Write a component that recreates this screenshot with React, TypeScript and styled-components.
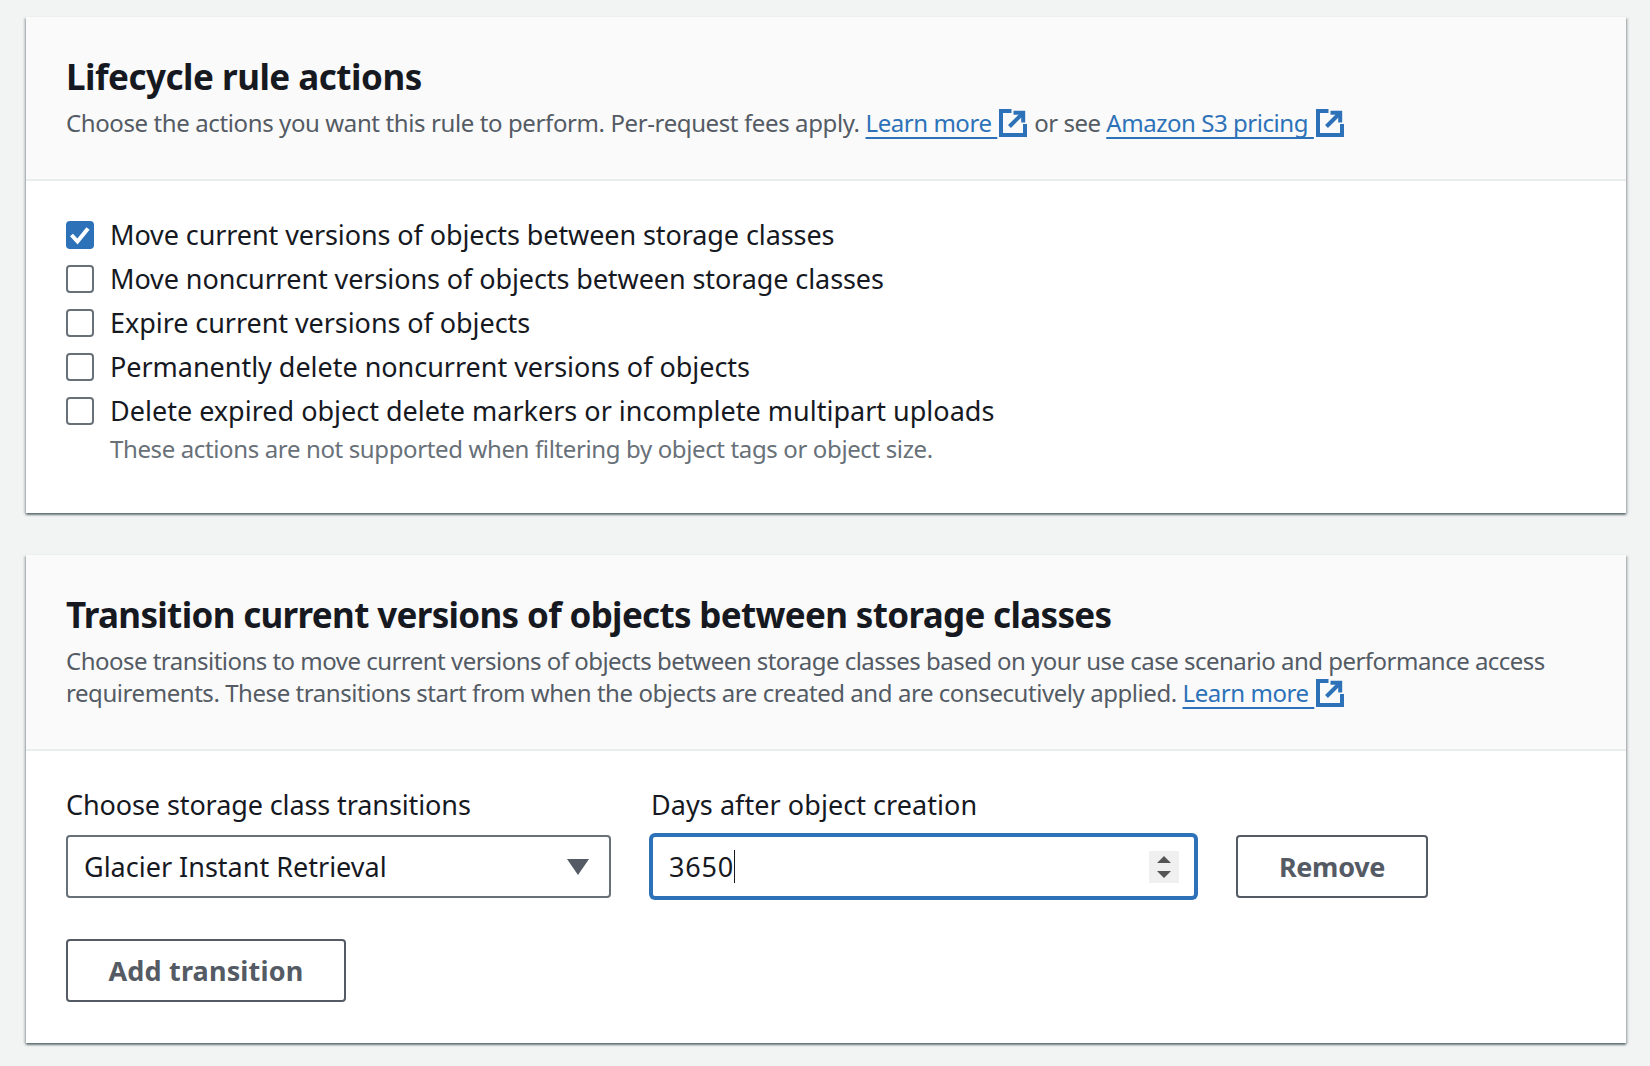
import { Fragment } from 'react';
import styled, { createGlobalStyle } from 'styled-components';

const GlobalStyle = createGlobalStyle`
  html, body { margin: 0; padding: 0; background: #f2f3f3; }
  body { font-family: "Noto Sans", "Open Sans", sans-serif; color: #16191f; }
`;

const Page = styled.div`
  display: flex;
  flex-direction: column;
  gap: 42px;
  padding: 17px 24px 23px 26px;
`;

const Card = styled.section`
  background: #fff;
  box-shadow: 0 2px 2px 0 rgba(0, 28, 36, 0.5), 2px 1px 2px 0 rgba(0, 28, 36, 0.15), -2px 1px 2px 0 rgba(0, 28, 36, 0.15);
`;

const CardHeader = styled.header`
  background: #fafafa;
  padding: 38px 40px 40px;
  border-bottom: 2px solid #eaeded;
`;

const Title = styled.h2<{ $tracking: number }>`
  margin: 0;
  font-size: 35px;
  line-height: 44px;
  font-weight: 700;
  letter-spacing: ${({ $tracking }) => $tracking}px;
  color: #16191f;
`;

const Description = styled.p`
  margin: 8px 0 0;
  font-size: 24px;
  line-height: 32px;
  color: #545b64;
`;

const DescriptionLine = styled.span<{ $tracking: number }>`
  letter-spacing: ${({ $tracking }) => $tracking}px;
`;

const ExternalLink = styled.a`
  color: #2d72b8;
  text-decoration: underline 2px #2d72b8;
  text-underline-offset: 5px;
  text-decoration-skip-ink: none;
  white-space: pre;
  letter-spacing: -0.45px;
`;

const ExternalGlyph = styled.svg`
  display: inline-block;
  width: 28px;
  height: 28px;
  margin: 0 7px 0 2px;
  vertical-align: -5px;
  fill: none;
  stroke: #2d72b8;
  stroke-width: 4;
`;

const ActionsBody = styled.div`
  padding: 32px 40px 48px;
`;

const CheckRow = styled.label`
  display: flex;
  align-items: center;
  gap: 16px;
  height: 44px;
  font-size: 27px;
`;

const CheckText = styled.span<{ $tracking: number }>`
  margin-top: -2px;
  letter-spacing: ${({ $tracking }) => $tracking}px;
`;

const CheckBox = styled.span<{ $checked?: boolean }>`
  box-sizing: border-box;
  flex: none;
  display: flex;
  align-items: center;
  justify-content: center;
  width: 28px;
  height: 28px;
  border-radius: 4px;
  border: 2px solid ${({ $checked }) => ($checked ? '#2d72b8' : '#687078')};
  background: ${({ $checked }) => ($checked ? '#2d72b8' : '#fff')};
`;

const CheckHint = styled.div`
  margin-left: 44px;
  font-size: 24px;
  line-height: 32px;
  letter-spacing: -0.37px;
  color: #687078;
`;

const TransitionsBody = styled.div`
  display: flex;
  flex-direction: column;
  align-items: flex-start;
  gap: 41px;
  padding: 32px 40px 41px;
`;

const TransitionRow = styled.div`
  display: flex;
  align-items: flex-end;
  gap: 40px;
`;

const Field = styled.div`
  display: flex;
  flex-direction: column;
  gap: 8px;
  width: 545px;
`;

const FieldLabel = styled.label<{ $tracking: number }>`
  font-size: 27px;
  line-height: 44px;
  letter-spacing: ${({ $tracking }) => $tracking}px;
`;

const SelectBox = styled.div`
  box-sizing: border-box;
  display: flex;
  align-items: center;
  justify-content: space-between;
  height: 63px;
  padding: 0 20px 0 16px;
  background: #fff;
  border: 2px solid #687078;
  border-radius: 4px;
  font-size: 27px;
`;

const CaretDown = styled.span`
  width: 0;
  height: 0;
  border-left: 11px solid transparent;
  border-right: 11px solid transparent;
  border-top: 16px solid #545b64;
`;

const NumberBox = styled.div`
  box-sizing: border-box;
  display: flex;
  align-items: center;
  height: 63px;
  padding: 0 15px 0 16px;
  background: #fff;
  border: 2px solid #2d72b8;
  box-shadow: 0 0 0 2px #2d72b8;
  border-radius: 4px;
  font-size: 27px;
  letter-spacing: 0.8px;
`;

const TextCaret = styled.span`
  width: 1px;
  height: 33px;
  background: #16191f;
`;

const Spinner = styled.svg`
  width: 30px;
  height: 32px;
  margin-left: auto;
  background: #f0f0f0;
`;

const OutlineButton = styled.button<{ $width: number; $tracking: number }>`
  box-sizing: border-box;
  width: ${({ $width }) => $width}px;
  height: 63px;
  padding: 0;
  background: #fff;
  border: 2px solid #545b64;
  border-radius: 4px;
  color: #545b64;
  font-family: inherit;
  font-size: 27px;
  font-weight: 700;
  letter-spacing: ${({ $tracking }) => $tracking}px;
`;

const actions = [
  { text: 'Move current versions of objects between storage classes', tracking: -0.09 },
  { text: 'Move noncurrent versions of objects between storage classes', tracking: -0.09 },
  { text: 'Expire current versions of objects', tracking: -0.06 },
  { text: 'Permanently delete noncurrent versions of objects', tracking: -0.03 },
  { text: 'Delete expired object delete markers or incomplete multipart uploads', tracking: 0 },
];

function ExternalIcon() {
  return (
    <ExternalGlyph viewBox="0 0 28 28">
      <path d="M12.5 2H2v24h24V15" />
      <path d="M14.5 3.8h9.7v9.7" />
      <path d="M24 4 10.5 17.5" />
    </ExternalGlyph>
  );
}

export default function App() {
  return (
    <Fragment>
      <GlobalStyle />
      <Page>
        <Card>
          <CardHeader>
            <Title $tracking={-0.5}>Lifecycle rule actions</Title>
            <Description>
              <DescriptionLine $tracking={-0.39}>
                Choose the actions you want this rule to perform. Per-request fees apply.{' '}
              </DescriptionLine>
              <ExternalLink href="#">Learn more </ExternalLink>
              <ExternalIcon />
              <DescriptionLine $tracking={-0.5}>or see </DescriptionLine>
              <ExternalLink href="#">Amazon S3 pricing </ExternalLink>
              <ExternalIcon />
            </Description>
          </CardHeader>
          <ActionsBody>
            {actions.map(({ text, tracking }, i) => (
              <CheckRow key={text}>
                <CheckBox $checked={i === 0}>
                  {i === 0 && (
                    <svg width="20" height="20" viewBox="0 0 20 20" fill="none" stroke="#fff" strokeWidth="4">
                      <path d="M1.5 10 7.5 16.5 18 3.5" />
                    </svg>
                  )}
                </CheckBox>
                <CheckText $tracking={tracking}>{text}</CheckText>
              </CheckRow>
            ))}
            <CheckHint>These actions are not supported when filtering by object tags or object size.</CheckHint>
          </ActionsBody>
        </Card>
        <Card>
          <CardHeader>
            <Title $tracking={-0.67}>Transition current versions of objects between storage classes</Title>
            <Description>
              <DescriptionLine $tracking={-0.52}>
                Choose transitions to move current versions of objects between storage classes based on your use case scenario and performance access
              </DescriptionLine>
              <br />
              <DescriptionLine $tracking={-0.44}>
                requirements. These transitions start from when the objects are created and are consecutively applied.{' '}
              </DescriptionLine>
              <ExternalLink href="#">Learn more </ExternalLink>
              <ExternalIcon />
            </Description>
          </CardHeader>
          <TransitionsBody>
            <TransitionRow>
              <Field>
                <FieldLabel $tracking={-0.1}>Choose storage class transitions</FieldLabel>
                <SelectBox>
                  Glacier Instant Retrieval
                  <CaretDown />
                </SelectBox>
              </Field>
              <Field>
                <FieldLabel $tracking={0.06}>Days after object creation</FieldLabel>
                <NumberBox>
                  3650
                  <TextCaret />
                  <Spinner viewBox="0 0 30 32">
                    <path d="M15 5 22 12H8Z M8 20H22L15 27Z" fill="#555" />
                  </Spinner>
                </NumberBox>
              </Field>
              <OutlineButton $width={192} $tracking={-0.3}>Remove</OutlineButton>
            </TransitionRow>
            <OutlineButton $width={280} $tracking={0.17}>Add transition</OutlineButton>
          </TransitionsBody>
        </Card>
      </Page>
    </Fragment>
  );
}
